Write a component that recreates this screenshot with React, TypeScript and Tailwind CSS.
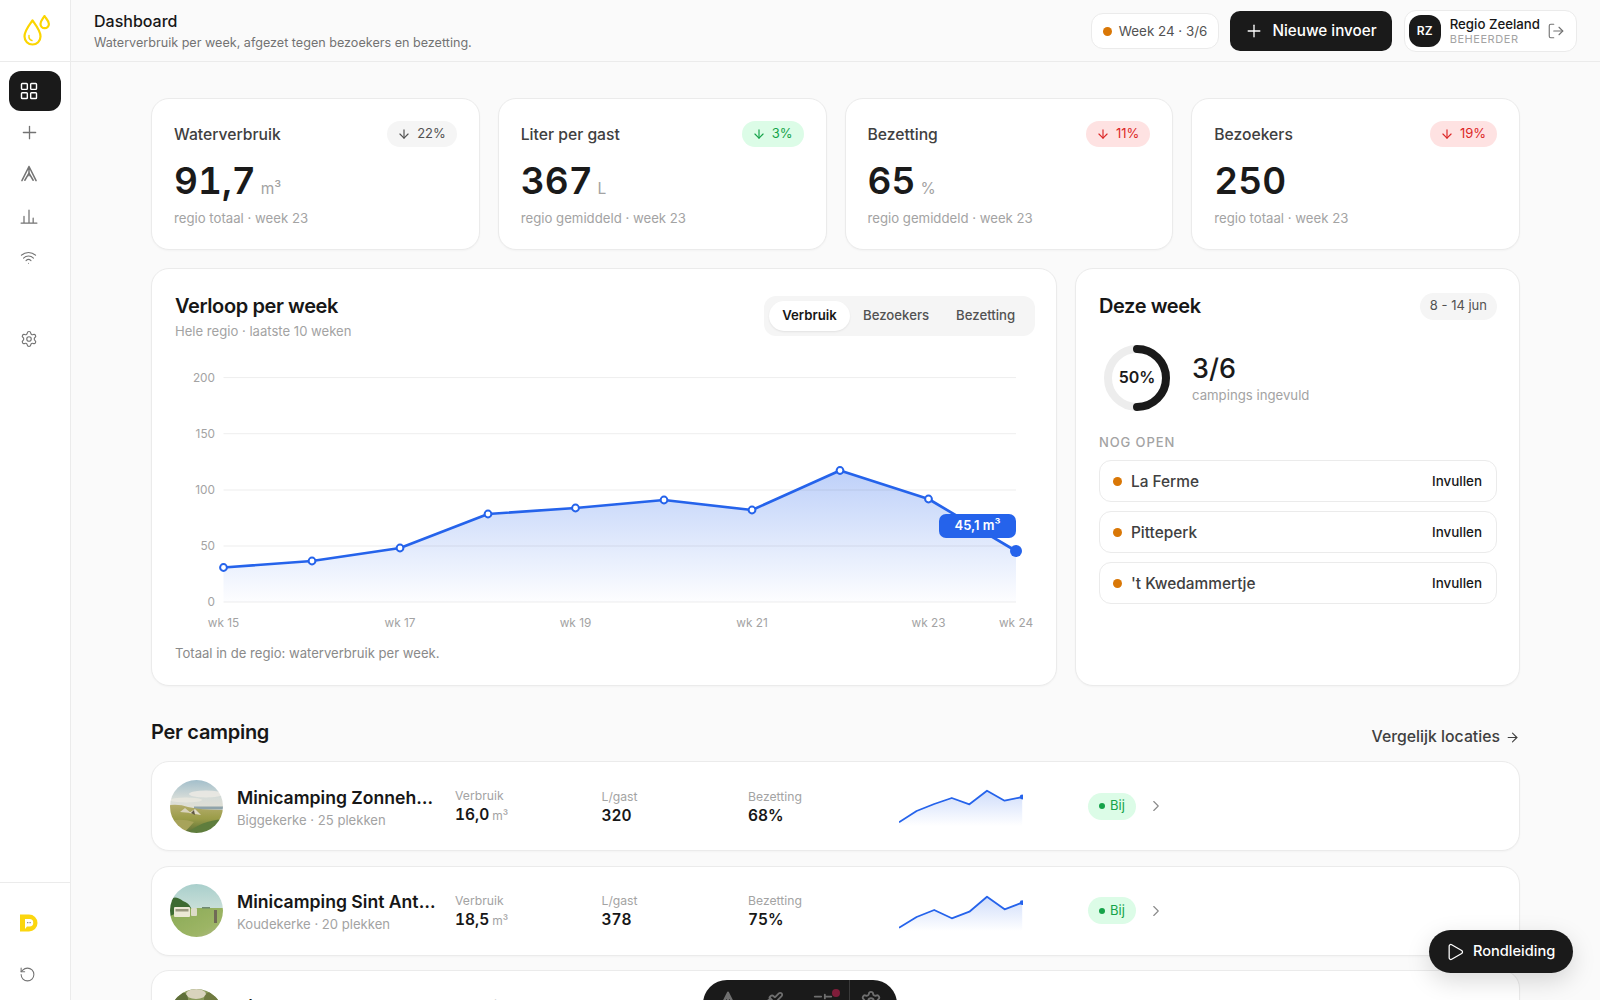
import { ArrowDown, ArrowRight, ChevronRight, LayoutGrid, LogOut, Paintbrush, Play, Plus, RotateCcw, Settings, SlidersHorizontal, Wifi } from "lucide-react";

const TentIcon = ({ size = 20, width = 1.8, className = "" }: { size?: number; width?: number; className?: string }) => (
  <svg width={size} height={size} viewBox="0 0 24 24" fill="none" stroke="currentColor" strokeWidth={width} strokeLinecap="round" strokeLinejoin="round" className={className}>
    <path d="M12 3 3.500 20M12 3l8.500 17M12 3v11" />
    <path d="M7 19.500 12 11l5 8.500" />
  </svg>
);

const BarsIcon = () => (
  <svg width="20" height="20" viewBox="0 0 24 24" fill="none" stroke="currentColor" strokeWidth="1.5" strokeLinecap="round">
    <path d="M2.500 20.500h19M6 20.500v-8M12 20.500V5M17 20.500v-6" />
  </svg>
);

const stats = [
  { label: "Waterverbruik", value: "91,7", unit: "m³", sub: "regio totaal · week 23", delta: "22%", tone: "bg-[#f5f5f5] text-[#525252]" },
  { label: "Liter per gast", value: "367", unit: "L", sub: "regio gemiddeld · week 23", delta: "3%", tone: "bg-[#dcfce7] text-[#16a34a]" },
  { label: "Bezetting", value: "65", unit: "%", sub: "regio gemiddeld · week 23", delta: "11%", tone: "bg-[#fee2e2] text-[#dc2626]" },
  { label: "Bezoekers", value: "250", unit: "", sub: "regio totaal · week 23", delta: "19%", tone: "bg-[#fee2e2] text-[#dc2626]" },
];

// chart points, local to the svg (x - 175, y - 360)
const chartPts: [number, number][] = [
  [48.5, 207.5], [137, 201], [225, 188], [313, 154], [400.5, 148], [489, 140], [577, 150], [665, 110.5], [753.5, 139], [841, 191],
];
const gridY = [{ y: 17.6, l: "200" }, { y: 73.7, l: "150" }, { y: 130, l: "100" }, { y: 186, l: "50" }, { y: 242, l: "0" }];
const xLabels = [{ x: 48.5, l: "wk 15" }, { x: 225, l: "wk 17" }, { x: 400.5, l: "wk 19" }, { x: 577, l: "wk 21" }, { x: 753.5, l: "wk 23" }, { x: 841, l: "wk 24" }];

const linePath = chartPts.map(([x, y]) => `${x},${y}`).join(" ");

function Chart() {
  return (
    <div className="relative mt-[18.500px] h-[280px] w-[858px]">
      <svg width="858" height="280" viewBox="0 0 858 280">
        <defs>
          <linearGradient id="area" x1="0" y1="0" x2="0" y2="1">
            <stop offset="0" stopColor="#2563eb" stopOpacity="0.3" />
            <stop offset="1" stopColor="#2563eb" stopOpacity="0.01" />
          </linearGradient>
        </defs>
        <polygon points={`48.5,242 ${linePath} 841,242`} fill="url(#area)" />
        {gridY.map((g) => (
          <g key={g.l}>
            <line x1="48.5" x2="841" y1={g.y} y2={g.y} stroke="#000" strokeOpacity="0.07" />
            <text x="40" y={g.y + 4} textAnchor="end" fontSize="11.8" fill="#a3a3a3">{g.l}</text>
          </g>
        ))}
        {xLabels.map((t) => (
          <text key={t.l} x={t.x} y="267" textAnchor="middle" fontSize="11.8" fill="#a3a3a3">{t.l}</text>
        ))}
        <polyline points={linePath} fill="none" stroke="#2563eb" strokeWidth="2.7" strokeLinejoin="round" />
        {chartPts.slice(0, -1).map(([x, y]) => (
          <circle key={x} cx={x} cy={y} r="3.4" fill="#fff" stroke="#2563eb" strokeWidth="2" />
        ))}
        <circle cx="841" cy="191" r="6" fill="#2563eb" />
      </svg>
      <div className="absolute left-[764px] top-[154px] flex h-[24px] w-[77px] items-center justify-center rounded-[7px] bg-[#2563eb] text-[13px] font-semibold text-white">
        45,1 m³
      </div>
    </div>
  );
}

function Spark({ ys, id }: { ys: number[]; id: string }) {
  const pts = ys.map((y, i) => `${(i * 17.6).toFixed(1)},${y}`).join(" ");
  return (
    <svg width="124" height="45" viewBox="0 0 124 45" className="mt-[5px] shrink-0">
      <defs>
        <linearGradient id={id} x1="0" y1="0" x2="0" y2="1">
          <stop offset="0" stopColor="#2563eb" stopOpacity="0.22" />
          <stop offset="1" stopColor="#2563eb" stopOpacity="0" />
        </linearGradient>
      </defs>
      <polygon points={`0,40 ${pts} 123.2,40`} fill={`url(#${id})`} />
      <polyline points={pts} fill="none" stroke="#2563eb" strokeWidth="1.8" strokeLinejoin="round" />
      <circle cx="123.2" cy={ys[ys.length - 1]} r="2.4" fill="#2563eb" />
    </svg>
  );
}

const ThumbDunes = () => (
  <svg viewBox="0 0 53 53" className="h-[53px] w-[53px] shrink-0 rounded-full">
    <defs>
      <linearGradient id="sky1" x1="0" y1="0" x2="0" y2="1">
        <stop offset="0" stopColor="#a3bfcb" />
        <stop offset="0.6" stopColor="#d6dcd8" />
        <stop offset="1" stopColor="#e3e0d4" />
      </linearGradient>
      <linearGradient id="dune1" x1="0" y1="0" x2="0" y2="1">
        <stop offset="0" stopColor="#b5ad6c" />
        <stop offset="0.5" stopColor="#9a9c48" />
        <stop offset="1" stopColor="#5b7038" />
      </linearGradient>
      <filter id="soft1"><feGaussianBlur stdDeviation="0.6" /></filter>
    </defs>
    <g filter="url(#soft1)">
      <rect width="53" height="30" fill="url(#sky1)" />
      <ellipse cx="36" cy="14" rx="17" ry="3.500" fill="#eceae4" opacity="0.85" />
      <ellipse cx="16" cy="20" rx="16" ry="2.500" fill="#eae8e0" opacity="0.8" />
      <rect x="24" y="26.500" width="29" height="3" fill="#8fa3aa" />
      <path d="M0 25 Q10 24 18 27 Q30 30 53 30 V53 H0z" fill="url(#dune1)" />
      <path d="M18 53 Q30 41 53 39 V53z" fill="#5f7d3c" />
      <path d="M0 41 Q12 38 24 42 L14 53 H0z" fill="#a7a35a" />
      <path d="M10 32 L15 28 L21 33z" fill="#d8d2bb" />
      <path d="M19 33 L25 29 L31 35z" fill="#e2dcc8" />
      <path d="M21 33 L24 30 L25 35z" fill="#5e5742" />
    </g>
  </svg>
);

const ThumbField = () => (
  <svg viewBox="0 0 53 53" className="h-[53px] w-[53px] shrink-0 rounded-full">
    <defs>
      <linearGradient id="sky2" x1="0" y1="0" x2="0" y2="1">
        <stop offset="0" stopColor="#a9cfcc" />
        <stop offset="1" stopColor="#c9dfd8" />
      </linearGradient>
      <linearGradient id="grass2" x1="0" y1="0" x2="1" y2="1">
        <stop offset="0" stopColor="#8aaa55" />
        <stop offset="0.7" stopColor="#9db566" />
        <stop offset="1" stopColor="#b4b98a" />
      </linearGradient>
      <filter id="soft2"><feGaussianBlur stdDeviation="0.5" /></filter>
    </defs>
    <g filter="url(#soft2)">
      <rect width="53" height="25" fill="url(#sky2)" />
      <rect y="24" width="53" height="29" fill="url(#grass2)" />
      <path d="M0 15 Q6 11 13 17 Q19 19 21 24 L14 26 L0 32z" fill="#3d6a30" />
      <rect x="4" y="23" width="16" height="10" rx="1" fill="#ece8d6" />
      <rect x="5.500" y="25" width="13" height="2.500" fill="#99977f" />
      <rect x="21" y="24" width="6" height="8" rx="1" fill="#dcdbc8" />
      <rect x="44" y="26" width="3" height="13" fill="#6f6a56" />
      <rect x="32" y="23" width="8" height="1.500" fill="#6f8a73" />
    </g>
  </svg>
);

const ThumbTrees = () => (
  <svg viewBox="0 0 53 53" className="h-[53px] w-[53px] shrink-0 rounded-full">
    <rect width="53" height="53" fill="#8a9a5b" />
    <ellipse cx="26" cy="5" rx="10" ry="5" fill="#d9d3bd" />
    <ellipse cx="8" cy="10" rx="10" ry="8" fill="#5f6f3a" />
    <ellipse cx="44" cy="10" rx="10" ry="8" fill="#6f7a40" />
  </svg>
);

const campings = [
  { name: "Minicamping Zonnehoeve", sub: "Biggekerke · 25 plekken", v: "16,0", l: "320", b: "68%", ys: [36.3, 25, 18, 12, 18.3, 4.7, 14.7, 11], Thumb: ThumbDunes },
  { name: "Minicamping Sint Anthonie", sub: "Koudekerke · 20 plekken", v: "18,5", l: "378", b: "75%", ys: [36.7, 26, 19, 27.3, 20.7, 5.7, 18.3, 11.7], Thumb: ThumbField },
  { name: "Pitteperk", sub: "Zoutelande · 15 plekken", v: "14,2", l: "341", b: "62%", ys: [34, 28, 22, 26, 18, 8, 16, 12], Thumb: ThumbTrees },
];

function Stat({ label, value, unit }: { label: string; value: string; unit?: string }) {
  return (
    <div className="pt-[2px]">
      <div className="text-[12.200px] leading-[17px] text-[#a3a3a3]">{label}</div>
      <div className="text-[15.500px] font-semibold leading-[22px] tabular-nums text-[#171717]">
        {value}
        {unit && <span className="ml-[3px] text-[12px] font-normal text-[#a3a3a3]">{unit}</span>}
      </div>
    </div>
  );
}

export default function App() {
  return (
    <div className="relative flex h-screen w-full overflow-hidden bg-[#fafafa] text-[#171717] [font-family:Inter,sans-serif]">
      <aside className="flex w-[71px] shrink-0 flex-col border-r border-[#ebebeb] bg-white">
        <div className="flex h-[62px] shrink-0 items-center border-b border-[#ebebeb] pl-[20px]">
          <svg width="32" height="34" viewBox="0 0 32 34" fill="none" stroke="#fbd500" strokeWidth="2.200" strokeLinecap="round" strokeLinejoin="round" className="mt-[3px]">
            <path d="M12.500 5.500C9 10.500 4.500 15.500 4.500 21.500a8 8 0 0 0 16 0C20.500 15.500 16 10.500 12.500 5.500z" />
            <path d="M9 20.500c-.3 2.500.8 4.500 3 5" strokeWidth="1.400" />
            <path d="M24.500 1C23 3.500 20.500 6 20.500 9a4.200 4.200 0 0 0 8.400 0c0-3-2.900-5.500-4.400-8z" />
          </svg>
        </div>
        <nav className="mt-[9px] flex flex-col gap-[1.500px] px-[9px] text-[#737373]">
          <div className="flex h-[40px] items-center rounded-[12px] bg-[#1a1a1a] pl-[10px] text-white">
            <LayoutGrid size={20} strokeWidth={1.7} />
          </div>
          <div className="flex h-[40px] items-center pl-[10px]"><Plus size={21} strokeWidth={1.5} /></div>
          <div className="flex h-[40px] items-center pl-[10px]"><TentIcon /></div>
          <div className="flex h-[40px] items-center pl-[10px]"><BarsIcon /></div>
          <div className="flex h-[40px] items-center pl-[11px]"><Wifi size={17} strokeWidth={1.5} /></div>
          <div className="mt-[40.500px] flex h-[40px] items-center pl-[11px]"><Settings size={18} strokeWidth={1.5} /></div>
        </nav>
        <div className="mt-auto flex h-[118px] shrink-0 flex-col items-start border-t border-[#ebebeb] pl-[19px] pt-[31px]">
          <svg width="20" height="18" viewBox="0 0 20 18" className="shrink-0">
            <path d="M1 0.500h9a8.500 8.500 0 0 1 0 17H1z" fill="#fbd60f" />
            <path d="M6 5h4.500a3.700 3.700 0 0 1 0 7.500H8L6 15z" fill="#fff" />
            <path d="M8 8.700h4" stroke="#777" strokeWidth="1" strokeDasharray="1 .6" />
          </svg>
          <div className="mt-[34px] text-[#737373]"><RotateCcw size={17} strokeWidth={1.5} /></div>
        </div>
      </aside>

      <div className="flex min-w-0 flex-1 flex-col">
        <header className="flex h-[62px] shrink-0 items-center justify-between border-b border-[#ebebeb] pl-[23px] pr-[23px]">
          <div className="pt-[2px]">
            <div className="text-[16px] font-medium leading-[20px] text-[#171717]">Dashboard</div>
            <div className="mt-[2px] text-[12.600px] leading-[20px] text-[#737373]">Waterverbruik per week, afgezet tegen bezoekers en bezetting.</div>
          </div>
          <div className="flex items-center">
            <div className="flex h-[36px] items-center gap-[7px] rounded-[12px] border border-[#ebebeb] bg-white px-[11px] pt-px text-[13.400px] text-[#525252]">
              <span className="h-[9px] w-[9px] rounded-full bg-[#d97706]" />
              Week 24 · 3/6
            </div>
            <button className="ml-[11px] flex h-[40px] items-center gap-[8px] rounded-[10px] bg-[#1a1a1a] pl-[14px] pr-[15px] pt-px text-[15.250px] font-medium text-white">
              <Plus size={20} strokeWidth={1.6} />
              Nieuwe invoer
            </button>
            <div className="ml-[12px] flex h-[42px] items-center rounded-[12px] border border-[#ebebeb] bg-white pl-[4px] pr-[11px]">
              <div className="flex h-[32px] w-[32px] items-center justify-center rounded-[12px] bg-[#1a1a1a] text-[12px] font-semibold text-white">RZ</div>
              <div className="ml-[9px]">
                <div className="text-[13.250px] font-medium leading-[16px] text-[#171717]">Regio Zeeland</div>
                <div className="text-[11px] leading-[14px] tracking-[0.05em] text-[#a3a3a3]">BEHEERDER</div>
              </div>
              <LogOut size={18} strokeWidth={1.5} className="ml-[7px] text-[#737373]" />
            </div>
          </div>
        </header>

        <main className="min-h-0 flex-1 overflow-hidden px-[80px] pt-[36px]">
          <div className="grid grid-cols-4 gap-[18px]">
            {stats.map((s) => (
              <div key={s.label} className="h-[152px] rounded-[18px] border border-[#ebebeb] bg-white px-[22px] pt-[22px] shadow-[0_1px_2px_rgba(0,0,0,0.03)]">
                <div className="flex h-[26px] items-center justify-between">
                  <span className="mt-[2px] text-[15.700px] font-medium text-[#404040]">{s.label}</span>
                  <span className={`flex h-[26px] items-center gap-[6px] rounded-full pl-[10px] pr-[11px] text-[13px] ${s.tone}`}>
                    <ArrowDown size={14} strokeWidth={2} />
                    {s.delta}
                  </span>
                </div>
                <div className="mt-[10px] flex h-[48px] items-baseline gap-[5px]">
                  <span className="text-[37px] font-semibold leading-[48px] tabular-nums text-[#1a1a1a]">{s.value}</span>
                  {s.unit && <span className="text-[15.500px] text-[#a3a3a3]">{s.unit}</span>}
                </div>
                <div className="mt-[3px] text-[13.200px] leading-[20px] text-[#a3a3a3]">{s.sub}</div>
              </div>
            ))}
          </div>

          <div className="mt-[18px] grid grid-cols-[906px_1fr] gap-[18px]">
            <section className="h-[418px] rounded-[18px] border border-[#ebebeb] bg-white px-[23px] pt-[23px] shadow-[0_1px_2px_rgba(0,0,0,0.03)]">
              <div className="flex h-[49px] items-start justify-between">
                <div>
                  <h2 className="text-[20px] font-semibold leading-[28px] tracking-[-0.02em] text-[#171717]">Verloop per week</h2>
                  <p className="mt-px text-[13.100px] leading-[20px] text-[#a3a3a3]">Hele regio · laatste 10 weken</p>
                </div>
                <div className="mr-[-2px] mt-[4px] flex h-[40px] w-[271px] items-center rounded-[12px] bg-[#f5f5f5] pb-px pl-[5px] text-[13.200px] font-medium text-[#525252]">
                  <span className="flex h-[30px] w-[81px] items-center justify-center rounded-full bg-white font-semibold text-[#171717] shadow-[0_1px_2px_rgba(0,0,0,0.08)]">Verbruik</span>
                  <span className="ml-[13px]">Bezoekers</span>
                  <span className="ml-[27px]">Bezetting</span>
                </div>
              </div>
              <Chart />
              <p className="mt-[3px] text-[13.100px] leading-[20px] text-[#8a8a8a]">Totaal in de regio: waterverbruik per week.</p>
            </section>

            <section className="h-[418px] rounded-[18px] border border-[#ebebeb] bg-white pl-[23px] pr-[22px] pt-[23px] shadow-[0_1px_2px_rgba(0,0,0,0.03)]">
              <div className="flex h-[28px] items-center justify-between">
                <h2 className="text-[20px] font-semibold tracking-[-0.02em] text-[#171717]">Deze week</h2>
                <span className="flex h-[27px] items-center rounded-full bg-[#f5f5f5] px-[10px] text-[13px] text-[#525252]">8 - 14 jun</span>
              </div>
              <div className="mt-[25px] flex items-center pl-[5px]">
                <div className="relative h-[66px] w-[66px] shrink-0">
                  <svg width="66" height="66" viewBox="0 0 66 66">
                    <circle cx="33" cy="33" r="29" fill="none" stroke="#ededed" strokeWidth="8" />
                    <path d="M33 4a29 29 0 0 1 0 58" fill="none" stroke="#1a1a1a" strokeWidth="8" strokeLinecap="round" />
                  </svg>
                  <div className="absolute inset-0 flex items-center justify-center pb-[2px] text-[16px] font-semibold text-[#1a1a1a]">50%</div>
                </div>
                <div className="ml-[22px] pt-[1px]">
                  <div className="text-[27px] font-medium leading-[32px] text-[#1a1a1a]">3/6</div>
                  <div className="text-[13.200px] leading-[20px] text-[#a3a3a3]">campings ingevuld</div>
                </div>
              </div>
              <div className="mt-[21px] text-[13px] font-medium leading-[20px] tracking-[0.07em] text-[#a3a3a3]">NOG OPEN</div>
              <div className="mt-[8px] flex flex-col gap-[9px]">
                {["La Ferme", "Pitteperk", "'t Kwedammertje"].map((n) => (
                  <div key={n} className="flex h-[42px] items-center rounded-[12px] border border-[#ebebeb] pl-[13px] pr-[14px]">
                    <span className="h-[9px] w-[9px] rounded-full bg-[#d97706]" />
                    <span className="ml-[9px] mt-[2px] text-[15.400px] font-medium text-[#404040]">{n}</span>
                    <span className="ml-auto text-[13.400px] font-medium text-[#171717]">Invullen</span>
                  </div>
                ))}
              </div>
            </section>
          </div>

          <div className="mt-[31px] flex h-[30px] items-center justify-between">
            <h2 className="text-[20px] font-semibold tracking-[-0.015em] text-[#171717]">Per camping</h2>
            <a className="mt-[10px] flex items-center gap-[5px] text-[15.800px] font-medium text-[#404040]">
              Vergelijk locaties
              <ArrowRight size={15} strokeWidth={1.7} />
            </a>
          </div>

          <div className="mt-[14px] flex flex-col gap-[14.500px]">
            {campings.map((c, i) => (
              <div key={c.name} className="flex h-[90px] shrink-0 items-center rounded-[18px] border border-[#ebebeb] bg-white pl-[18px] shadow-[0_1px_2px_rgba(0,0,0,0.03)]">
                <c.Thumb />
                <div className="ml-[14px] mr-[18px] w-[200px] shrink-0">
                  <div className="mt-[3px] truncate text-[17.600px] font-semibold leading-[24px] text-[#171717]">{c.name}</div>
                  <div className="text-[13.100px] leading-[20px] text-[#a3a3a3]">{c.sub}</div>
                </div>
                <div className="w-[146.500px] shrink-0"><Stat label="Verbruik" value={c.v} unit="m³" /></div>
                <div className="w-[146.500px] shrink-0"><Stat label="L/gast" value={c.l} /></div>
                <div className="w-[151px] shrink-0"><Stat label="Bezetting" value={c.b} /></div>
                <Spark ys={c.ys} id={`spark${i}`} />
                <span className="ml-[65px] flex h-[27px] w-[48px] items-center justify-center gap-[5px] rounded-full bg-[#dcfce7] text-[13px] text-[#16a34a]">
                  <span className="h-[6px] w-[6px] rounded-full bg-[#16a34a]" />
                  Bij
                </span>
                <ChevronRight size={18} strokeWidth={1.5} className="ml-[11px] text-[#8a8a8a]" />
              </div>
            ))}
          </div>
        </main>
      </div>

      <div className="absolute left-[703px] top-[980px] flex h-[60px] w-[194px] rounded-t-[24px] bg-[#1a1a1a] text-[#6f6f6f]">
        <div className="relative flex-1">
          <TentIcon size={24} width={2.500} className="absolute left-[13px] top-[10px]" />
          <Paintbrush size={22} className="absolute left-[59px] top-[11px]" />
          <SlidersHorizontal size={22} className="absolute left-[109px] top-[12px]" />
          <span className="absolute left-[129px] top-[9px] h-[8px] w-[8px] rounded-full bg-[#7f1d3a]" />
        </div>
        <div className="relative w-[48px] border-l border-[#3a3a3a]">
          <Settings size={22} className="absolute left-[10px] top-[10px]" />
        </div>
      </div>

      <button className="absolute bottom-[27px] right-[27px] flex h-[43px] w-[144px] items-center gap-[8px] rounded-full bg-[#1a1a1a] pl-[16px] text-[14.600px] font-medium text-white shadow-[0_8px_24px_rgba(0,0,0,0.15)]">
        <Play size={20} strokeWidth={1.5} />
        Rondleiding
      </button>
    </div>
  );
}
